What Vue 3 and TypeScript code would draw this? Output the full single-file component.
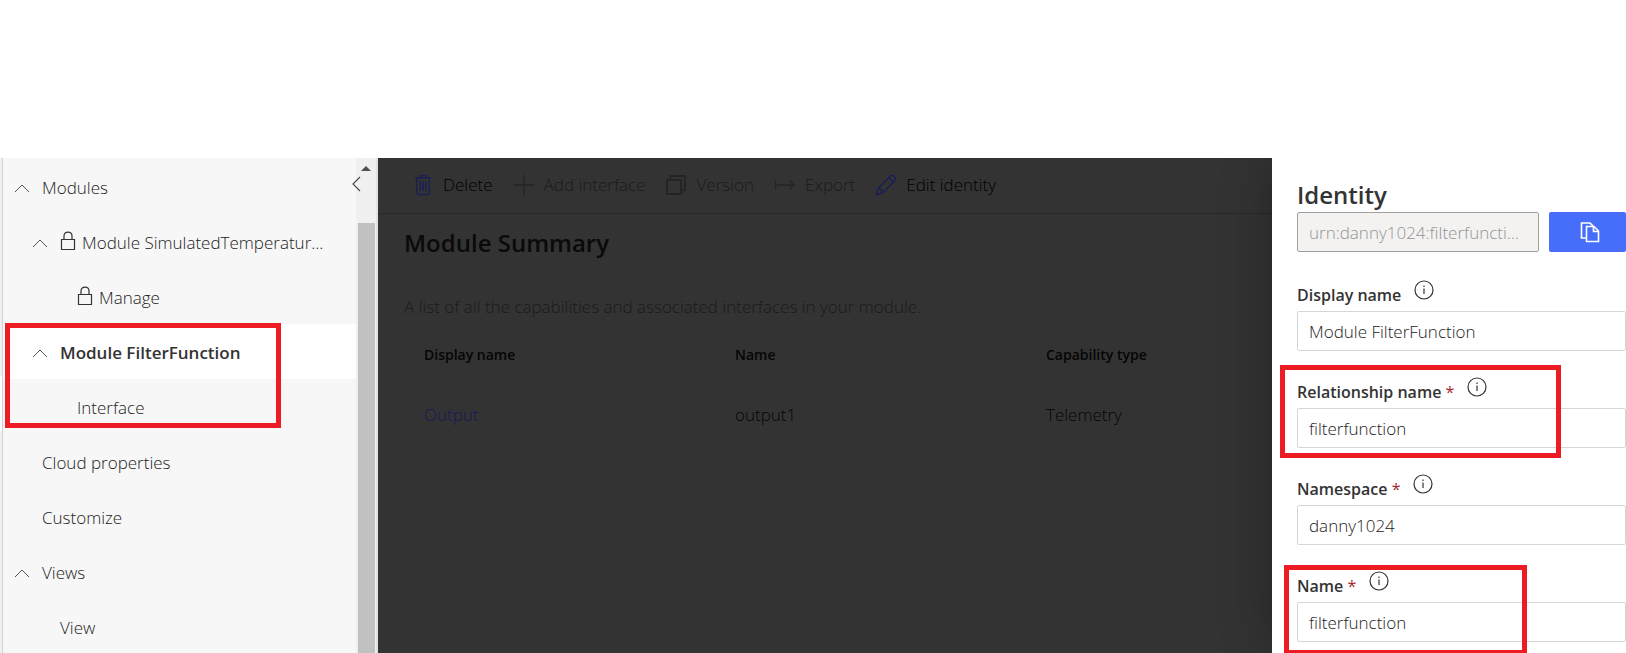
<script setup lang="ts">
import { ref } from 'vue'

interface NavItem {
  label: string
  level: number
  expandable?: boolean
  locked?: boolean
  active?: boolean
}

interface Field {
  id: string
  label: string
  required: boolean
  value: string
}

const navItems: NavItem[] = [
  { label: 'Modules', level: 0, expandable: true },
  { label: 'Module SimulatedTemperatur...', level: 1, expandable: true, locked: true },
  { label: 'Manage', level: 2, locked: true },
  { label: 'Module FilterFunction', level: 1, expandable: true, active: true },
  { label: 'Interface', level: 2 },
  { label: 'Cloud properties', level: 0 },
  { label: 'Customize', level: 0 },
  { label: 'Views', level: 0, expandable: true },
  { label: 'View', level: 1 },
]

const fields = ref<Field[]>([
  { id: 'display-name', label: 'Display name', required: false, value: 'Module FilterFunction' },
  { id: 'relationship-name', label: 'Relationship name', required: true, value: 'filterfunction' },
  { id: 'namespace', label: 'Namespace', required: true, value: 'danny1024' },
  { id: 'name', label: 'Name', required: true, value: 'filterfunction' },
])

const urn = 'urn:danny1024:filterfunction:1'
</script>

<template>
  <div class="page">
    <div class="workspace">
      <div class="rail"><span class="rail-active"></span></div>

      <nav class="nav" aria-label="Template">
        <ul class="nav-list">
          <li v-for="item in navItems" :key="item.label">
            <a href="#" class="nav-item" :class="['level-' + item.level, { active: item.active }]">
              <span class="chevron-slot">
                <svg v-if="item.expandable" width="16" height="10" viewBox="0 0 16 10">
                  <path d="M1 9 L8 2 L15 9" fill="none" stroke="#555" stroke-width="1" />
                </svg>
              </span>
              <svg v-if="item.locked" class="lock" width="16" height="20" viewBox="0 0 16 20">
                <path d="M1.5 8.5 H14.5 V18.5 H1.5 Z M4 8.5 V5 C4 -0.2 12 -0.2 12 5 V8.5" fill="none" stroke="#333" stroke-width="1.2" />
              </svg>
              <span>{{ item.label }}</span>
            </a>
          </li>
        </ul>
      </nav>

      <div class="scrollbar">
        <svg class="scroll-up" width="10" height="5" viewBox="0 0 10 5"><path d="M0 5 L5 0 L10 5 Z" fill="#505050" /></svg>
        <span class="thumb"></span>
        <button class="collapse" type="button" aria-label="Collapse navigation">
          <svg width="10" height="18" viewBox="0 0 10 18"><path d="M9 2 L2 9 L9 16" fill="none" stroke="#444" stroke-width="1.1" /></svg>
        </button>
      </div>

      <main class="main">
        <div class="toolbar">
          <button type="button" class="tool delete">
            <svg width="18" height="22" viewBox="0 0 18 22" fill="none" stroke="#191e55" stroke-width="1.3">
              <path d="M1 4 H17 M6 4 V1.7 H12 V4 M2.7 4 V19 Q2.7 20.5 4.2 20.5 H13.8 Q15.3 20.5 15.3 19 V4 M6.3 7 V17 M9 7 V17 M11.7 7 V17" />
            </svg>
            Delete
          </button>
          <button type="button" class="tool" disabled>
            <svg width="22" height="22" viewBox="0 0 22 22" fill="none" stroke="#242424" stroke-width="1.4"><path d="M1 11 H21 M11 1 V21" /></svg>
            Add interface
          </button>
          <button type="button" class="tool" disabled>
            <svg width="22" height="22" viewBox="0 0 22 22" fill="none" stroke="#242424" stroke-width="1.8"><path d="M2 6 H16 V20 H2 Z M5.5 6 V2 H20 V16.3 H16" /></svg>
            Version
          </button>
          <button type="button" class="tool" disabled>
            <svg width="22" height="22" viewBox="0 0 22 22" fill="none" stroke="#242424" stroke-width="1.3"><path d="M1.5 6.5 V15.5 M3 11 H20 M15.5 6.5 L20 11 L15.5 15.5" /></svg>
            Export
          </button>
          <button type="button" class="tool">
            <svg width="22" height="22" viewBox="0 0 22 22" fill="none" stroke="#191e55" stroke-width="1.4">
              <path d="M1.5 20.5 L3 14.5 L15.5 2 Q17.5 0.5 19.5 2.5 Q21.5 4.5 20 6.5 L7.5 19 Z M14 3.5 L18.5 8 M3 14.5 Q7 15 7.5 19" />
            </svg>
            Edit identity
          </button>
        </div>

        <div class="content">
          <h1>Module Summary</h1>
          <p>A list of all the capabilities and associated interfaces in your module.</p>
          <table>
            <thead>
              <tr><th scope="col">Display name</th><th scope="col">Name</th><th scope="col">Capability type</th></tr>
            </thead>
            <tbody>
              <tr><td><a href="#">Output</a></td><td>output1</td><td>Telemetry</td></tr>
            </tbody>
          </table>
        </div>
      </main>

      <aside class="panel">
        <h2>Identity</h2>
        <div class="urn-row">
          <input class="text-box urn" type="text" :value="urn" disabled aria-label="Identity URN" />
          <button type="button" class="copy" aria-label="Copy identity">
            <svg width="20" height="22" viewBox="0 0 20 22" fill="none" stroke="#fff" stroke-width="1.6">
              <path d="M6 17 H1.5 V2 H10 L13 5 M6.5 5.5 H14 L18.5 10 V20.5 H6.5 Z M13.5 5.5 V10.5 H18.5" />
            </svg>
          </button>
        </div>
        <div v-for="field in fields" :key="field.id" class="field">
          <div class="label-row">
            <label :for="field.id">{{ field.label }}<span v-if="field.required" class="required"> *</span></label>
            <svg class="info" width="20" height="20" viewBox="0 0 20 20">
              <circle cx="10" cy="10" r="9" fill="none" stroke="#333" stroke-width="1.2" />
              <path d="M10 8.5 V14 M10 5.5 V7" stroke="#333" stroke-width="1.2" />
            </svg>
          </div>
          <input :id="field.id" v-model="field.value" class="text-box" type="text" />
        </div>
      </aside>

      <span class="callout callout-module"></span>
      <span class="callout callout-relationship"></span>
      <span class="callout callout-name"></span>
    </div>
  </div>
</template>

<style>
body {
  background: #fff;
}
</style>

<style scoped>
* {
  box-sizing: border-box;
}

.page {
  height: 100vh;
  padding-top: 158px;
  overflow: hidden;
  font: 300 17px/24px "Open Sans", "Noto Sans", sans-serif;
  color: #222;
}

.workspace {
  position: relative;
  display: flex;
  height: 100%;
  overflow: hidden;
}

.rail {
  flex: none;
  width: 3px;
  padding-top: 218px;
  background: #f0f0f0;
  border-right: 1px solid #d2d2d2;
}

.rail-active {
  display: block;
  height: 55px;
  background: #fff;
}

.nav {
  flex: none;
  width: 353px;
  padding-top: 1px;
  background: #f7f7f7;
}

.nav-list {
  margin: 0;
  padding: 0;
  list-style: none;
}

.nav-item {
  display: flex;
  align-items: center;
  height: 55px;
  padding-top: 2px;
  color: #222;
  text-decoration: none;
  white-space: nowrap;
}

.level-0 {
  padding-left: 11px;
}

.level-1 {
  padding-left: 29px;
}

.level-2 {
  padding-left: 46px;
}

.active {
  background: #fff;
  color: #333;
  font-weight: 600;
}

.chevron-slot {
  display: flex;
  flex: none;
  width: 28px;
}

.lock {
  flex: none;
  margin-top: -4px;
  margin-right: 6px;
}

.scrollbar {
  position: relative;
  display: flex;
  flex: none;
  flex-direction: column;
  align-items: center;
  width: 22px;
  padding-top: 8px;
  background: #f0f0f0;
  border-right: 2px solid #e3e3e3;
}

.thumb {
  flex: 1;
  width: 17px;
  margin-top: 52px;
  background: #c1c1c1;
}

.collapse {
  position: absolute;
  top: 17px;
  left: -5px;
  display: flex;
  padding: 0;
  background: none;
  border: 0;
}

.main {
  flex: 1;
  min-width: 0;
  overflow: hidden;
  background: #333;
}

.toolbar {
  display: flex;
  align-items: center;
  gap: 20px;
  height: 56px;
  padding: 0 34px 2px;
  border-bottom: 1px solid #292929;
}

.tool {
  display: flex;
  flex: none;
  align-items: center;
  gap: 9px;
  padding: 0;
  background: none;
  border: 0;
  color: #000;
  font: inherit;
  white-space: nowrap;
}

.tool:disabled {
  color: #1a1a1a;
}

.delete {
  padding-left: 2px;
  gap: 11px;
}

.content {
  padding: 12px 26px;
}

h1,
h2 {
  margin: 0;
  color: #333;
  font-size: 24px;
  font-weight: 600;
  line-height: 34px;
}

h1 {
  color: #0a0a0a;
}

p {
  margin: 35px 0 13px;
  color: #1a1a1a;
  line-height: 24px;
  white-space: nowrap;
}

table {
  width: 933px;
  table-layout: fixed;
  border-collapse: collapse;
  color: #050505;
}

th,
td {
  padding: 0 20px;
  text-align: left;
}

th {
  height: 46px;
  font-size: 14px;
  font-weight: 600;
}

td {
  height: 74px;
}

td a {
  color: #14195a;
  text-decoration: none;
}

.panel {
  position: relative;
  flex: none;
  width: 354px;
  padding: 20px 0 0 25px;
  background: #fff;
  box-shadow: 0 0 48px rgba(0, 0, 0, 0.3);
}

.urn-row {
  display: flex;
  gap: 10px;
  margin-bottom: 32px;
}

.text-box {
  display: block;
  width: 100%;
  height: 40px;
  padding: 0 11px;
  background: #fff;
  border: 1px solid #d6d6d6;
  border-radius: 2px;
  color: #222;
  font: inherit;
}

.urn {
  flex: 1;
  min-width: 0;
  padding-right: 16px;
  background: #f3f2f1;
  border-color: #a0a0a0;
  color: #949494;
  text-overflow: ellipsis;
}

.copy {
  display: flex;
  flex: none;
  align-items: center;
  justify-content: center;
  width: 77px;
  height: 40px;
  padding: 0 0 0 4px;
  background: #466efb;
  border: 0;
  border-radius: 2px;
}

.field {
  margin-bottom: 30px;
}

.label-row {
  display: flex;
  align-items: flex-start;
  gap: 13px;
  height: 27px;
}

label {
  color: #333;
  font-size: 16px;
  font-weight: 600;
  line-height: 22px;
}

.required {
  color: #a4262c;
  font-weight: 400;
}

.info {
  flex: none;
  margin-top: -4px;
}

.callout {
  position: absolute;
  border: 5px solid #ed1c24;
  pointer-events: none;
}

.callout-module {
  top: 165px;
  left: 5px;
  width: 276px;
  height: 105px;
}

.callout-relationship {
  top: 207px;
  right: 65px;
  width: 281px;
  height: 93px;
}

.callout-name {
  top: 407px;
  right: 99px;
  width: 243px;
  height: 90px;
}
</style>
